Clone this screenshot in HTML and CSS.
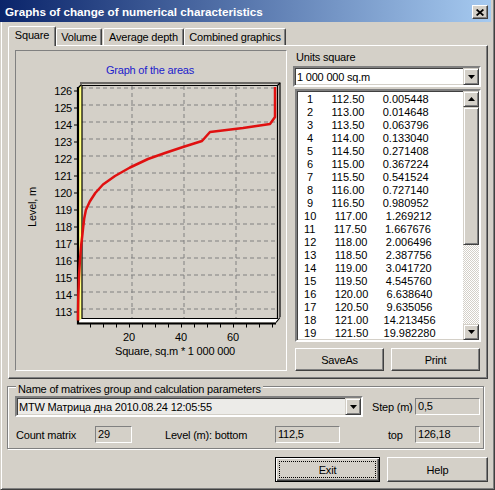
FILE: index.html
```html
<!DOCTYPE html>
<html lang="en">
<head>
    <meta charset="UTF-8">
    <title>Graphs of change of numerical characteristics</title>
    <link rel="stylesheet" href="styles.css">
</head>
<body>
<div class="window">
    <div class="titlebar">
        <span class="title">Graphs of change of numerical characteristics</span>
        <span class="close">
            <svg width="8" height="7" viewBox="0 0 8 7"><path d="M0.6 0.5L7.4 6.5M7.4 0.5L0.6 6.5" stroke="#000" stroke-width="1.7"/></svg>
        </span>
    </div>

    <div class="client">
        <div class="tabs">
            <div class="tab active">Square</div>
            <div class="tab tab-volume">Volume</div>
            <div class="tab tab-depth">Average depth</div>
            <div class="tab tab-combined">Combined graphics</div>
        </div>

        <div class="tabpage">
            <div class="chart">
                <svg class="plot" width="270" height="319" viewBox="16 51 270 319">
                    <text class="plot-title" x="150" y="74">Graph of the areas</text>

                    <!-- back wall grid -->
                    <path class="grid" d="M82 88H277M82 105H277M82 122H277M82 139H277M82 156H277M82 173H277M82 190H277M82 207H277M82 224H277M82 241H277M82 258H277M82 275H277M82 292H277M82 309H277"/>
                    <path class="grid" d="M132 86V318M184 86V318M236 86V318"/>

                    <!-- walls -->
                    <polygon points="78,88 82,85 82,318 78,322" fill="#ffff80"/>
                    <polygon points="78,322 82,318.5 280,318.5 276,322" fill="#fff"/>
                    <path class="frame" d="M80 83H280V317"/>
                    <path class="frame" d="M82 85.5H277.5V318.5H82Z"/>
                    <path class="frame" d="M77.5 88.5L81.5 84.5M277.5 85.5L280 83M276 322.5L280 317.5"/>
                    <path class="axis" d="M78 87V323.5H276"/>

                    <!-- ticks -->
                    <path class="tick" d="M74 91H78M74 108H78M74 125H78M74 142H78M74 159H78M74 176H78M74 193H78M74 210H78M74 227H78M74 244H78M74 261H78M74 278H78M74 295H78M74 312H78"/>
                    <path class="tick" d="M90.5 324V327.5M103.5 324V327.5M116.5 324V327.5M129.5 324V327.5M142.5 324V327.5M155.5 324V327.5M168.5 324V327.5M181.5 324V327.5M194.5 324V327.5M207.5 324V327.5M220.5 324V327.5M233.5 324V327.5M246.5 324V327.5M259.5 324V327.5M272.5 324V327.5"/>

                    <g class="ylabels">
                        <text x="72" y="95">126</text>
                        <text x="72" y="112">125</text>
                        <text x="72" y="129">124</text>
                        <text x="72" y="146">123</text>
                        <text x="72" y="163">122</text>
                        <text x="72" y="180">121</text>
                        <text x="72" y="197">120</text>
                        <text x="72" y="214">119</text>
                        <text x="72" y="231">118</text>
                        <text x="72" y="248">117</text>
                        <text x="72" y="265">116</text>
                        <text x="72" y="282">115</text>
                        <text x="72" y="299">114</text>
                        <text x="72" y="316">113</text>
                    </g>
                    <g class="xlabels">
                        <text x="129" y="341">20</text>
                        <text x="181" y="341">40</text>
                        <text x="233" y="341">60</text>
                        <text x="175" y="355">Square, sq.m * 1 000 000</text>
                    </g>
                    <text class="ytitle" x="36" y="207" transform="rotate(-90 36 207)">Level, m</text>

                    <path class="curve" d="M78 320.5L78.04 312L78.17 303.5L78.35 295L78.7 286.5L78.95 278L79.4 269.5L79.9 261L80.55 252.5L81.3 244L82.3 235.5L83.2 227L84.2 218.5L85.9 210L89.8 201.5L95.3 193L103 184.5L115 176L130 167.5L148 159L165 153L183 147L202 141L210 132L243 128L270 124L275 117L275 87"/>
                </svg>
            </div>

            <div class="side">
                <div class="side-label">Units square</div>
                <div class="combo">
                    <span class="combo-text">1 000 000 sq.m</span>
                    <span class="combo-btn"><svg width="7" height="4" viewBox="0 0 7 4"><polygon points="0,0 7,0 3.5,4" fill="#000"/></svg></span>
                </div>
                <div class="listbox">
                    <div class="rows">
                        <div>  1      112.50      0.005448</div>
                        <div>  2      113.00      0.014648</div>
                        <div>  3      113.50      0.063796</div>
                        <div>  4      114.00      0.133040</div>
                        <div>  5      114.50      0.271408</div>
                        <div>  6      115.00      0.367224</div>
                        <div>  7      115.50      0.541524</div>
                        <div>  8      116.00      0.727140</div>
                        <div>  9      116.50      0.980952</div>
                        <div> 10      117.00      1.269212</div>
                        <div> 11      117.50      1.667676</div>
                        <div> 12      118.00      2.006496</div>
                        <div> 13      118.50      2.387756</div>
                        <div> 14      119.00      3.041720</div>
                        <div> 15      119.50      4.545760</div>
                        <div> 16      120.00      6.638640</div>
                        <div> 17      120.50      9.635056</div>
                        <div> 18      121.00     14.213456</div>
                        <div> 19      121.50     19.982280</div>
                    </div>
                    <div class="scrollbar">
                        <span class="sb-btn"><svg width="7" height="4" viewBox="0 0 7 4"><polygon points="0,4 7,4 3.5,0" fill="#000"/></svg></span>
                        <span class="sb-thumb"></span>
                        <span class="sb-track"></span>
                        <span class="sb-btn"><svg width="7" height="4" viewBox="0 0 7 4"><polygon points="0,0 7,0 3.5,4" fill="#000"/></svg></span>
                    </div>
                </div>
                <div class="side-buttons">
                    <button class="btn btn-side">SaveAs</button>
                    <button class="btn btn-side">Print</button>
                </div>
            </div>
        </div>

        <div class="group">
            <div class="group-title">Name of matrixes group and calculation parameters</div>
            <div class="group-row">
                <div class="combo combo-matrix">
                    <span class="combo-text">MTW Матрица дна 2010.08.24 12:05:55</span>
                    <span class="combo-btn"><svg width="7" height="4" viewBox="0 0 7 4"><polygon points="0,0 7,0 3.5,4" fill="#000"/></svg></span>
                </div>
                <span class="field-label label-step">Step (m)</span>
                <span class="edit edit-wide">0,5</span>
            </div>
            <div class="group-row row-second">
                <span class="field-label label-count">Count matrix</span>
                <span class="edit edit-narrow">29</span>
                <span class="field-label label-bottom">Level (m): bottom</span>
                <span class="edit edit-wide">112,5</span>
                <span class="field-label label-top">top</span>
                <span class="edit edit-wide">126,18</span>
            </div>
        </div>

        <div class="footer">
            <button class="btn btn-default btn-exit"><span class="focus">Exit</span></button>
            <button class="btn btn-help">Help</button>
        </div>
    </div>
</div>
</body>
</html>
```

FILE: styles.css
```css
* {
    box-sizing: border-box;
}
body {
    margin: 0;
    font-family: "Liberation Sans", Arial, sans-serif;
    font-size: 11px;
    letter-spacing: -0.2px;
    color: #000;
    background: #d4d0c8;
}
.window {
    width: 495px;
    height: 490px;
    background: #d4d0c8;
    border-left: 1px solid #d4d0c8;
    border-right: 1px solid #404040;
    border-bottom: 1px solid #404040;
    box-shadow: inset 1px 0 #fff, inset -1px -1px #808080;
}

/* title bar */
.titlebar {
    height: 22px;
    margin: 0 3px 0 -1px;
    padding: 0 3px 0 5px;
    display: flex;
    align-items: center;
    background: linear-gradient(to right, #0a246a, #a6caf0);
    color: #fff;
    font-weight: bold;
    font-size: 11.7px;
    letter-spacing: 0;
}
.close {
    margin: 2px 0 0 auto;
    width: 16px;
    height: 14px;
    display: flex;
    align-items: center;
    justify-content: center;
    background: #d4d0c8;
    border: 1px solid;
    border-color: #fff #404040 #404040 #fff;
    box-shadow: inset -1px -1px #808080;
}
.close svg {
    display: block;
}

.client {
    padding: 4px 6px 0 7px;
}

/* tabs */
.tabs {
    display: flex;
    align-items: flex-end;
    height: 19px;
}
.tab {
    height: 17px;
    padding-top: 2px;
    line-height: 13px;
    text-align: center;
    border: 1px solid;
    border-bottom: none;
    border-color: #fff #404040 transparent #fff;
    border-radius: 2px 2px 0 0;
    box-shadow: inset -1px 0 #808080;
    background: #d4d0c8;
}
.tab.active {
    width: 48px;
    height: 20px;
    margin-bottom: -1px;
    position: relative;
    z-index: 1;
}
.tab-volume {
    width: 46px;
}
.tab-depth {
    width: 81px;
    margin-left: 1px;
}
.tab-combined {
    width: 102px;
}

.tabpage {
    height: 334px;
    display: flex;
    align-items: flex-start;
    padding: 4px 0 0 6px;
    border: 1px solid;
    border-color: #fff #404040 #404040 #fff;
    box-shadow: inset -1px -1px #808080;
}

/* chart */
.chart {
    width: 272px;
    height: 321px;
    border: 1px solid;
    border-color: #808080 #fff #fff #808080;
}
.plot {
    display: block;
    font-family: "Liberation Sans", Arial, sans-serif;
    font-size: 11px;
}
.plot-title {
    fill: #1c1ccc;
    text-anchor: middle;
}
.grid {
    fill: none;
    stroke: #808080;
    stroke-width: 1;
    stroke-dasharray: 4 3;
}
.frame {
    fill: none;
    stroke: #000;
    stroke-width: 1.2;
}
.axis {
    fill: none;
    stroke: #000;
    stroke-width: 2.2;
}
.tick {
    fill: none;
    stroke: #000;
    stroke-width: 1;
}
.ylabels text {
    text-anchor: end;
}
.xlabels text,
.ytitle {
    text-anchor: middle;
}
.curve {
    fill: none;
    stroke: #e01010;
    stroke-width: 2.5;
    stroke-linejoin: round;
}

/* right side */
.side {
    width: 188px;
    margin-left: 6px;
}
.side-label {
    margin-top: 1px;
    padding-left: 3px;
    line-height: 13px;
}
.combo {
    height: 21px;
    display: flex;
    align-items: center;
    background: #fff;
    border: 2px solid;
    border-color: #808080 #fff #fff #808080;
    box-shadow: inset 1px 1px #404040, inset -1px -1px #d4d0c8;
}
.side .combo {
    margin-top: 2px;
}
.combo-text {
    flex: 1;
    padding-left: 2px;
    white-space: nowrap;
}
.combo-btn,
.sb-btn,
.sb-thumb {
    background: #d4d0c8;
    border: 1px solid;
    border-color: #d4d0c8 #404040 #404040 #d4d0c8;
    box-shadow: inset 1px 1px #fff, inset -1px -1px #808080;
}
.combo-btn {
    width: 16px;
    height: 17px;
    display: flex;
    align-items: center;
    justify-content: center;
}
.combo-btn svg,
.sb-btn svg {
    display: block;
}

.listbox {
    margin: 2px 0 0 2px;
    width: 186px;
    height: 253px;
    display: flex;
    background: #fff;
    border: 2px solid;
    border-color: #808080 #fff #fff #808080;
    box-shadow: inset 1px 1px #404040, inset -1px -1px #d4d0c8;
}
.rows {
    flex: 1;
    padding: 2px 0 0 4px;
    line-height: 13px;
    letter-spacing: 0;
    overflow: hidden;
}
.rows div {
    white-space: pre;
}
.scrollbar {
    width: 16px;
    display: flex;
    flex-direction: column;
    background-image: repeating-conic-gradient(#fff 0 25%, #d4d0c8 0 50%);
    background-size: 2px 2px;
}
.sb-btn {
    height: 16px;
    display: flex;
    align-items: center;
    justify-content: center;
}
.sb-thumb {
    height: 138px;
}
.sb-track {
    flex: 1;
}

.side-buttons {
    display: flex;
    gap: 7px;
    margin: 6px 0 0 2px;
}

/* buttons */
.btn {
    padding: 0;
    font: inherit;
    letter-spacing: inherit;
    color: #000;
    display: flex;
    align-items: center;
    justify-content: center;
    background: #d4d0c8;
    border: 1px solid;
    border-color: #fff #404040 #404040 #fff;
    box-shadow: inset -1px -1px #808080;
}
.btn-side {
    width: 89px;
    height: 23px;
}
.btn-default {
    border-color: #000;
    box-shadow: inset 1px 1px #fff, inset -1px -1px #404040, inset -2px -2px #808080;
}
.focus {
    flex: 1;
    align-self: stretch;
    margin: 3px;
    display: flex;
    align-items: center;
    justify-content: center;
    border: 1px dotted #000;
}
.btn-exit {
    width: 105px;
    height: 25px;
}
.btn-help {
    width: 101px;
    height: 25px;
}

/* group box */
.group {
    margin: 7px 0 0 -1px;
    width: 477px;
    height: 63px;
    padding-left: 7px;
    border: 1px solid #808080;
    box-shadow: inset 1px 1px #fff, 1px 1px #fff;
}
.group-title {
    width: fit-content;
    margin: -4px 0 0 1px;
    padding: 0 2px;
    line-height: 13px;
    background: #d4d0c8;
}
.group-row {
    display: flex;
    align-items: center;
}
.row-second {
    margin-top: 9px;
}
.combo-matrix {
    width: 348px;
    background: #ecebe8;
}
.field-label {
    white-space: nowrap;
}
.label-step {
    width: 43px;
    margin-left: 9px;
}
.label-count {
    width: 79px;
    margin-left: 1px;
}
.label-bottom {
    width: 110px;
    margin-left: 33px;
}
.label-top {
    width: 27px;
    margin-left: 48px;
}
.edit {
    height: 17px;
    padding-left: 2px;
    line-height: 15px;
    border: 1px solid;
    border-color: #808080 #fff #fff #808080;
}
.edit-wide {
    width: 65px;
}
.edit-narrow {
    width: 37px;
}

.footer {
    display: flex;
    justify-content: flex-end;
    gap: 7px;
    margin-top: 8px;
}
```
